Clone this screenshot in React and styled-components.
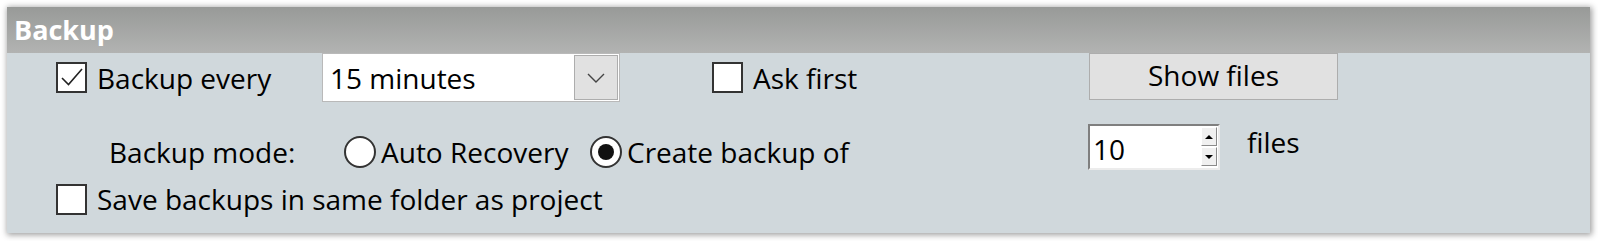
import React from 'react'
import styled, { createGlobalStyle } from 'styled-components'

const GlobalStyle = createGlobalStyle`
  html, body {
    margin: 0;
    padding: 0;
    background: #ffffff;
  }
  body {
    font-family: "Open Sans", "Noto Sans", sans-serif;
    color: #000;
  }
`

const Panel = styled.div`
  margin: 7px 8px 8px 7px;
  width: 1583px;
  box-shadow: 1px 1px 6px 1px rgba(0, 0, 0, 0.38);
`

const Header = styled.div`
  height: 46px;
  background: linear-gradient(to bottom, #989a98, #b2b3b2);
  color: #fff;
  font-size: 27px;
  font-weight: 700;
  line-height: 45px;
  padding-left: 7px;
`

const Body = styled.div`
  background: #d0d8dc;
  height: 180px;
  box-sizing: border-box;
  padding-bottom: 15px;
`

const Row = styled.div`
  display: flex;
  align-items: ${props => props.align || 'center'};
  height: ${props => props.height}px;
  margin-top: ${props => props.top || 0}px;
  padding-left: ${props => props.left || 0}px;
`

const Label = styled.span`
  font-size: 28px;
  line-height: 38px;
  white-space: nowrap;
  width: ${props => (props.width ? `${props.width}px` : 'auto')};
  margin-left: ${props => props.ml || 0}px;
  margin-top: ${props => props.mt || 0}px;
  flex: none;
`

const CheckItem = styled.label`
  display: flex;
  align-items: center;
  gap: 10px;
  flex: none;
  width: ${props => (props.width ? `${props.width}px` : 'auto')};
  margin-left: ${props => props.ml || 0}px;
  font-size: 28px;
  line-height: 38px;
  white-space: nowrap;
`

const Box = styled.span`
  width: 31px;
  height: 31px;
  box-sizing: border-box;
  border: 2px solid #333;
  background: #fff;
  flex: none;
  display: flex;
`

const RadioItem = styled.label`
  display: flex;
  align-items: center;
  gap: 5px;
  flex: none;
  width: ${props => props.width}px;
  margin-top: ${props => props.mt || 0}px;
  font-size: 28px;
  line-height: 38px;
  white-space: nowrap;
`

const Circle = styled.span`
  width: 32px;
  height: 32px;
  box-sizing: border-box;
  border: 2px solid #333;
  border-radius: 50%;
  background: #fff;
  flex: none;
  display: flex;
  align-items: center;
  justify-content: center;

  &::after {
    content: '';
    width: 16px;
    height: 16px;
    border-radius: 50%;
    background: #111;
    display: ${props => (props.checked ? 'block' : 'none')};
  }
`

const Combo = styled.div`
  width: 298px;
  height: 49px;
  box-sizing: border-box;
  border: 1px solid #b9b9b9;
  background: #fff;
  display: flex;
  align-items: center;
  justify-content: space-between;
  padding: 1px 1px 1px 7px;
  font-size: 28px;
  flex: none;
`

const ComboButton = styled.span`
  width: 44px;
  height: 100%;
  box-sizing: border-box;
  border: 1px solid #adadad;
  background: #e1e1e1;
  display: flex;
  align-items: center;
  justify-content: center;
`

const Button = styled.div`
  width: 249px;
  height: 47px;
  box-sizing: border-box;
  border: 1px solid #adadad;
  background: #e1e1e1;
  margin-left: ${props => props.ml || 0}px;
  font-size: 28px;
  line-height: 43px;
  text-align: center;
  align-self: flex-start;
  flex: none;
`

const Spin = styled.div`
  width: 132px;
  height: 46px;
  box-sizing: border-box;
  border-top: 2px solid #7f7f7f;
  border-left: 2px solid #7f7f7f;
  border-right: 2px solid #ececec;
  border-bottom: 2px solid #ececec;
  background: #fff;
  display: flex;
  flex: none;
`

const SpinValue = styled.span`
  flex: 1;
  font-size: 28px;
  line-height: 38px;
  padding-left: 3px;
  padding-top: 4px;
`

const SpinButtons = styled.div`
  display: flex;
  flex-direction: column;
  gap: 1px;
  padding: 1px 1px 0 0;
`

const SpinButton = styled.span`
  width: 16px;
  height: 19px;
  box-sizing: border-box;
  background: #f0f0f0;
  border-top: 1px solid #fff;
  border-left: 1px solid #fff;
  border-right: 1px solid #8a8a8a;
  border-bottom: 1px solid #8a8a8a;
  display: flex;
  align-items: center;
  justify-content: center;

  &::after {
    content: '';
    width: 0;
    height: 0;
    border-left: 4px solid transparent;
    border-right: 4px solid transparent;
    ${props => (props.down ? 'border-top: 4px solid #000;' : 'border-bottom: 4px solid #000;')}
  }
`

const Check = () => (
  <svg width="27" height="27" viewBox="0 0 27 27">
    <path d="M4 14 L10.5 20.5 L24 5" fill="none" stroke="#222" strokeWidth="1.6" />
  </svg>
)

const Chevron = () => (
  <svg width="18" height="10" viewBox="0 0 18 10">
    <path d="M1 1 L9 9 L17 1" fill="none" stroke="#444" strokeWidth="1.4" />
  </svg>
)

const App = () => {
  return (
    <>
      <GlobalStyle />
      <Panel>
        <Header>Backup</Header>
        <Body>
          <Row height={49} left={49}>
            <CheckItem width={266}>
              <Box><Check /></Box>
              Backup every
            </CheckItem>
            <Combo>
              15 minutes
              <ComboButton><Chevron /></ComboButton>
            </Combo>
            <CheckItem ml={92} width={377}>
              <Box />
              Ask first
            </CheckItem>
            <Button>Show files</Button>
          </Row>

          <Row height={46} top={22} left={102} align="flex-start">
            <Label width={235} mt={9}>Backup mode:</Label>
            <RadioItem width={246} mt={9}>
              <Circle />
              Auto Recovery
            </RadioItem>
            <RadioItem width={498} mt={9}>
              <Circle checked />
              Create backup of
            </RadioItem>
            <Spin>
              <SpinValue>10</SpinValue>
              <SpinButtons>
                <SpinButton />
                <SpinButton down />
              </SpinButtons>
            </Spin>
            <Label ml={27} mt={-1}>files</Label>
          </Row>

          <Row height={38} top={10} left={49}>
            <CheckItem>
              <Box />
              Save backups in same folder as project
            </CheckItem>
          </Row>
        </Body>
      </Panel>
    </>
  )
}

export default App
